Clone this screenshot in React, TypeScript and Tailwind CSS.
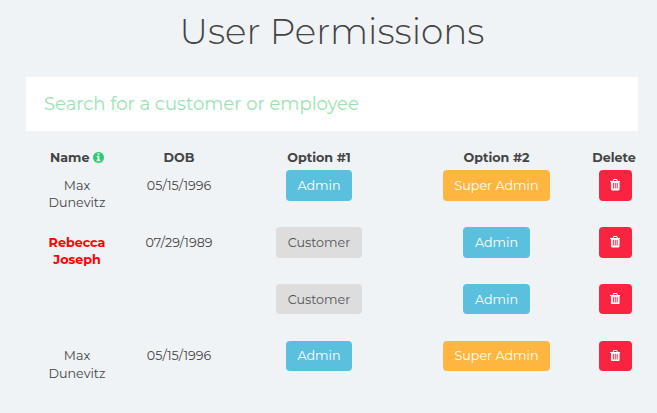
import type { ReactNode } from "react";

type Role = "Admin" | "Super Admin" | "Customer";

interface Person {
  name?: string;
  dob?: string;
  first: Role;
  second: Role;
  flagged?: boolean;
}

const people: Person[] = [
  { name: "Max Dunevitz", dob: "05/15/1996", first: "Admin", second: "Super Admin" },
  { name: "Rebecca Joseph", dob: "07/29/1989", first: "Customer", second: "Admin", flagged: true },
  { first: "Customer", second: "Admin" },
  { name: "Max Dunevitz", dob: "05/15/1996", first: "Admin", second: "Super Admin" },
];

const roleStyles: Record<Role, string> = {
  Admin: "bg-[#5bc0de] text-white",
  "Super Admin": "bg-[#ffb640] text-white",
  Customer: "bg-[#dddddd] text-[#555555]",
};

const columns = "grid grid-cols-[102px_102px_178px_177px_60px]";

function Button({ className, label, children }: { className: string; label?: string; children: ReactNode }) {
  return (
    <button
      aria-label={label}
      className={`inline-flex h-[30.5px] items-center justify-center rounded-[4px] px-[11.5px] ${className}`}
    >
      {children}
    </button>
  );
}

function TrashIcon() {
  return (
    <svg viewBox="0 0 1408 1536" className="mb-px h-[11.5px] w-[10.5px] shrink-0" fill="currentColor">
      <path d="M512 1248V544q0-14-9-23t-23-9h-64q-14 0-23 9t-9 23v704q0 14 9 23t23 9h64q14 0 23-9t9-23zm256 0V544q0-14-9-23t-23-9h-64q-14 0-23 9t-9 23v704q0 14 9 23t23 9h64q14 0 23-9t9-23zm256 0V544q0-14-9-23t-23-9h-64q-14 0-23 9t-9 23v704q0 14 9 23t23 9h64q14 0 23-9t9-23zM480 256h448l-48-117q-7-9-17-11H546q-10 2-17 11zm928 32v64q0 14-9 23t-23 9h-96v948q0 83-47 143.500t-113 60.500H288q-66 0-113-58.500T128 1336V384H32q-14 0-23-9t-9-23v-64q0-14 9-23t23-9h309l70-167q15-37 54-63t79-26h320q40 0 79 26t54 63l70 167h309q14 0 23 9t9 23z" />
    </svg>
  );
}

function InfoIcon() {
  return (
    <svg viewBox="0 0 1536 1536" className="size-[11px] shrink-0 text-[#2ecc71]" fill="currentColor">
      <path d="M1024 1248v-160q0-14-9-23t-23-9h-96V544q0-14-9-23t-23-9H544q-14 0-23 9t-9 23v160q0 14 9 23t23 9h96v320h-96q-14 0-23 9t-9 23v160q0 14 9 23t23 9h448q14 0 23-9t9-23zM896 352V192q0-14-9-23t-23-9H672q-14 0-23 9t-9 23v160q0 14 9 23t23 9h192q14 0 23-9t9-23zm640 416q0 209-103 385.500T1153.500 1433 768 1536t-385.500-103T103 1153.500 0 768t103-385.500T382.500 103 768 0t385.500 103T1433 382.500 1536 768z" />
    </svg>
  );
}

export default function App() {
  return (
    <main className="h-[413px] overflow-hidden bg-[#eff3f6] px-[26px] pt-[7px] font-['Montserrat','Inter',sans-serif] text-[12.7px] leading-[17.4px] text-[#444444]">
      <h1 className="mr-[-7px] h-[70px] text-center text-[35.8px] leading-[48px] font-light">User Permissions</h1>
      <input
        className="block h-[54px] w-[612px] bg-white px-[18px] text-[18.05px] text-[#2ecc71] outline-none placeholder:text-[#9be2b3] placeholder:opacity-100"
        placeholder="Search for a customer or employee"
      />
      <div className={`${columns} mt-[18px] h-[21.3px] text-center font-bold`}>
        <div className="flex items-center justify-center gap-[3.5px] self-start">
          Name <InfoIcon />
        </div>
        <div>DOB</div>
        <div>Option #1</div>
        <div>Option #2</div>
        <div className="-ml-0.5">Delete</div>
      </div>
      {people.map((person, i) => (
        <div key={i} className={`${columns} h-[56.85px] text-center`}>
          <div className={`px-5 pt-[6.5px] ${person.flagged ? "font-bold text-[#ff0000]" : ""}`}>{person.name}</div>
          <div className="pt-[6.5px]">{person.dob}</div>
          <div>
            <Button className={roleStyles[person.first]}>{person.first}</Button>
          </div>
          <div>
            <Button className={roleStyles[person.second]}>{person.second}</Button>
          </div>
          <div>
            <Button className="w-[33px] bg-[#fa2441] text-white" label="Delete">
              <TrashIcon />
            </Button>
          </div>
        </div>
      ))}
    </main>
  );
}
